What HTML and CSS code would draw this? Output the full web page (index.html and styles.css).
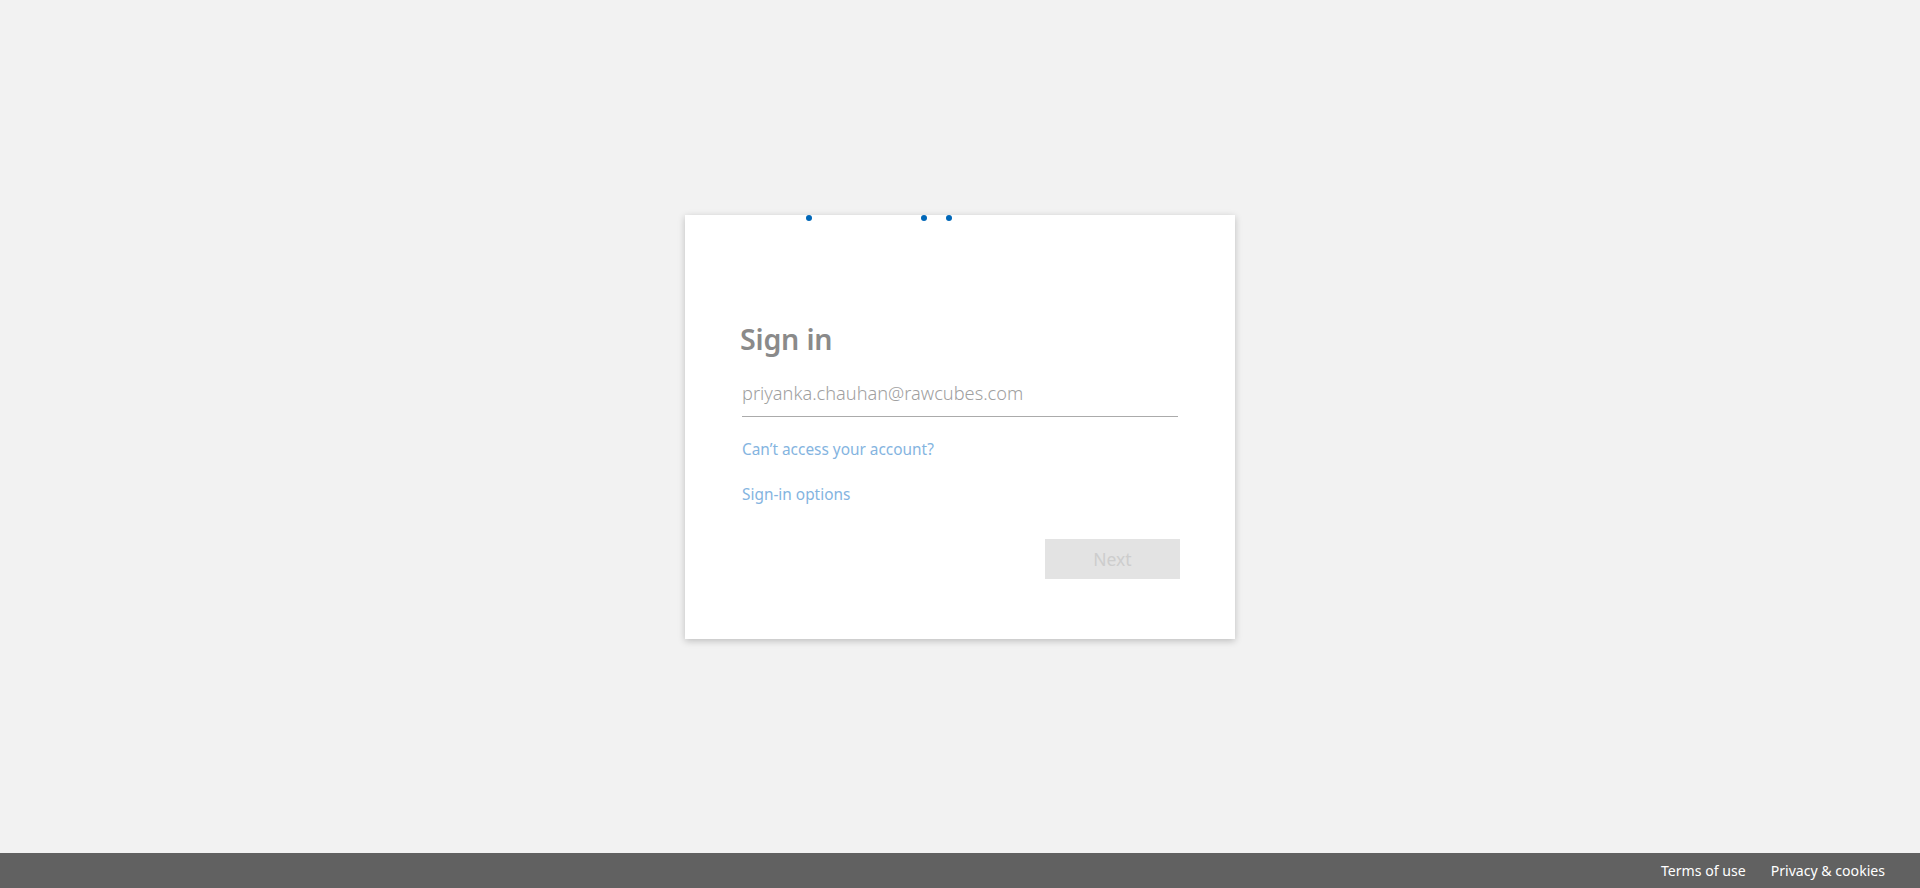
FILE: index.html
```html
<!DOCTYPE html>
<html lang="en">
<head>
<meta charset="utf-8">
<title>Sign in to your account</title>
<link rel="stylesheet" href="styles.css">
</head>
<body>
<div class="page">
  <main class="stage">
    <div class="card">
      <div class="progress">
        <span class="dot dot-1"></span>
        <span class="dot dot-2"></span>
        <span class="dot dot-3"></span>
      </div>
      <div class="logo"></div>
      <div class="title">Sign in</div>
      <div class="input">priyanka.chauhan@rawcubes.com</div>
      <div class="link link-first">Can’t access your account?</div>
      <div class="link link-second">Sign-in options</div>
      <div class="actions">
        <div class="btn">Next</div>
      </div>
    </div>
  </main>
  <footer class="footer">
    <span class="footer-link">Terms of use</span>
    <span class="footer-link">Privacy &amp; cookies</span>
  </footer>
</div>
</body>
</html>
```

FILE: styles.css
```css
html, body {
  margin: 0;
  padding: 0;
  height: 100%;
}
body {
  background: #f2f2f2;
  font-family: "Noto Sans", "Open Sans", "DejaVu Sans", sans-serif;
}
.page {
  height: 888px;
  display: flex;
  flex-direction: column;
}
.stage {
  flex: 1;
  display: flex;
  align-items: center;
  justify-content: center;
}
.card {
  position: relative;
  width: 440px;
  padding: 55px 55px 60px;
  background: #ffffff;
  box-shadow: 0 2px 7px rgba(0, 0, 0, 0.22);
}
.progress {
  position: absolute;
  left: 0;
  top: 0;
  width: 100%;
  height: 7px;
}
.dot {
  position: absolute;
  top: 0;
  width: 6px;
  height: 6px;
  border-radius: 50%;
  background: #0067b8;
}
.dot-1 { left: 121px; }
.dot-2 { left: 236px; }
.dot-3 { left: 261px; }
.logo {
  height: 30px;
}
.title {
  margin-top: 21px;
  font-size: 28.6px;
  line-height: 35px;
  font-weight: 600;
  color: #8a8a8a;
  letter-spacing: -0.2px;
}
.input {
  margin: 15px 2px 0;
  padding: 9px 0 10px;
  font-size: 18.2px;
  line-height: 26px;
  font-weight: 300;
  color: #a0a0a0;
  border-bottom: 1px solid #ababab;
}
.link {
  margin-left: 2px;
  font-size: 15.4px;
  line-height: 22px;
  color: #84b4df;
}
.link-first {
  margin-top: 22px;
}
.link-second {
  margin-top: 23px;
}
.actions {
  margin-top: 33px;
  display: flex;
  justify-content: flex-end;
}
.btn {
  width: 135px;
  height: 40px;
  background: #e3e3e3;
  color: #cdcdcd;
  font-size: 17.5px;
  line-height: 40px;
  text-align: center;
}
.footer {
  height: 35px;
  background: #616161;
  display: flex;
  justify-content: flex-end;
  align-items: center;
  gap: 25px;
  padding-right: 35px;
}
.footer-link {
  color: #ffffff;
  font-size: 14.1px;
  line-height: 35px;
}
```
